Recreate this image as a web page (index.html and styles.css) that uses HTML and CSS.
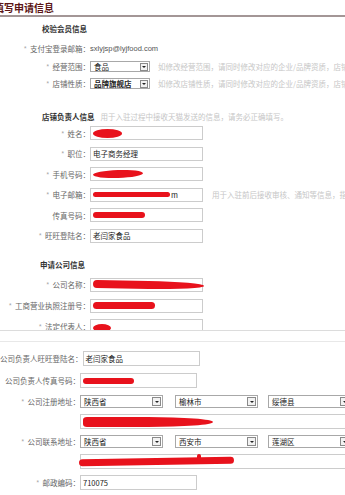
FILE: index.html
```html
<!DOCTYPE html>
<html lang="zh-CN">
<head>
    <meta charset="UTF-8">
    <meta name="viewport" content="width=device-width, initial-scale=1.0">
    <title>填写申请信息</title>
    <link rel="stylesheet" href="styles.css">
</head>
<body>
    <h2 class="page-title">填写申请信息</h2>

    <div class="part part-top">
        <h3 class="group-title gt-1">校验会员信息</h3>
        <div class="row r-email">
            <label class="lbl"><i class="req">*</i>支付宝登录邮箱：</label>
            <span class="plain">sxlyjsp@lyjfood.com</span>
        </div>
        <div class="row r-sel">
            <label class="lbl"><i class="req">*</i>经营范围：</label>
            <div class="select"><span>食品</span><b class="arrow"></b></div>
            <span class="hint">如修改经营范围，请同时修改对应的企业/品牌资质，店铺类型</span>
        </div>
        <div class="row r-sel">
            <label class="lbl"><i class="req">*</i>店铺性质：</label>
            <div class="select"><span class="dark">品牌旗舰店</span><b class="arrow"></b></div>
            <span class="hint">如修改店铺性质，请同时修改对应的企业/品牌资质，店铺类型</span>
        </div>

        <h3 class="group-title gt-2">店铺负责人信息<span class="hint">用于入驻过程中接收天猫发送的信息，请务必正确填写。</span></h3>
        <div class="row r-first">
            <label class="lbl"><i class="req">*</i>姓名：</label>
            <div class="input"><span class="scrib s-name"></span></div>
        </div>
        <div class="row">
            <label class="lbl"><i class="req">*</i>职位：</label>
            <div class="input">电子商务经理</div>
        </div>
        <div class="row">
            <label class="lbl"><i class="req">*</i>手机号码：</label>
            <div class="input"><span class="scrib s-mobile"></span></div>
        </div>
        <div class="row">
            <label class="lbl"><i class="req">*</i>电子邮箱：</label>
            <div class="input"><span class="scrib s-mail"></span>m</div>
            <span class="hint hint-wide">用于入驻前后接收审核、通知等信息，指导</span>
        </div>
        <div class="row">
            <label class="lbl">传真号码：</label>
            <div class="input"><span class="scrib s-fax"></span></div>
        </div>
        <div class="row">
            <label class="lbl"><i class="req">*</i>旺旺登陆名：</label>
            <div class="input">老闫家食品</div>
        </div>

        <h3 class="group-title gt-3">申请公司信息</h3>
        <div class="row r-co">
            <label class="lbl"><i class="req">*</i>公司名称：</label>
            <div class="input"><span class="scrib s-company"></span></div>
        </div>
        <div class="row r-co">
            <label class="lbl"><i class="req">*</i>工商营业执照注册号：</label>
            <div class="input"><span class="scrib s-license"></span></div>
        </div>
        <div class="row">
            <label class="lbl"><i class="req">*</i>法定代表人：</label>
            <div class="input"><span class="scrib s-legal"></span></div>
        </div>
    </div>

    <div class="cut"></div>

    <div class="part part-bottom">
        <div class="row r-b1">
            <label class="lbl">公司负责人旺旺登陆名：</label>
            <div class="input">老闫家食品</div>
        </div>
        <div class="row r-b2">
            <label class="lbl">公司负责人传真号码：</label>
            <div class="input"><span class="scrib s-cofax"></span></div>
        </div>
        <div class="row">
            <label class="lbl"><i class="req">*</i>公司注册地址：</label>
            <div class="select"><span>陕西省</span><b class="arrow"></b></div>
            <div class="select"><span>榆林市</span><b class="arrow"></b></div>
            <div class="select"><span>绥德县</span><b class="arrow"></b></div>
        </div>
        <div class="row">
            <span class="lbl"></span>
            <div class="input input-long"><span class="scrib s-addr1"></span></div>
        </div>
        <div class="row">
            <label class="lbl"><i class="req">*</i>公司联系地址：</label>
            <div class="select"><span>陕西省</span><b class="arrow"></b></div>
            <div class="select"><span>西安市</span><b class="arrow"></b></div>
            <div class="select"><span>莲湖区</span><b class="arrow"></b></div>
        </div>
        <div class="row">
            <span class="lbl"></span>
            <div class="input input-long"><span class="scrib s-addr2"></span><span class="scrib s-bump"></span></div>
        </div>
        <div class="row">
            <label class="lbl"><i class="req">*</i>邮政编码：</label>
            <div class="input">710075</div>
        </div>
    </div>
</body>
</html>
```

FILE: styles.css
```css
* {
    box-sizing: border-box;
    margin: 0;
    padding: 0;
}

body {
    width: 345px;
    height: 495px;
    overflow: hidden;
    background-color: #fff;
    font-family: "Noto Sans CJK SC", "Liberation Sans", sans-serif;
    font-size: 7.5px;
    color: #666;
}

.page-title {
    margin-left: -6px;
    font-size: 10px;
    line-height: 15px;
    font-weight: bold;
    color: #5c1616;
    border-bottom: 2px solid #a39696;
}

.part {
    overflow: hidden;
}

.part-top {
    height: 313px;
}

.cut {
    height: 12px;
    border-top: 1px solid #dcdcdc;
    border-bottom: 1px solid #e8e8e8;
}

.group-title {
    padding-left: 42px;
    font-size: 7.5px;
    line-height: 12px;
    font-weight: bold;
    color: #333;
    white-space: nowrap;
}

.group-title .hint {
    font-weight: normal;
    margin-left: 6px;
}

.gt-1 { margin-top: 6px; }
.gt-2 { margin-top: 22px; }
.gt-3 { margin-top: 16px; padding-left: 40px; }

.row {
    display: flex;
    align-items: center;
    white-space: nowrap;
    margin-top: 6.5px;
}

.r-email { height: 14px; margin-top: 6px; }
.r-sel { margin-top: 6px; }
.r-first { margin-top: 3px; }
.r-co { margin-top: 7px; }

.lbl {
    flex: 0 0 90px;
    display: flex;
    justify-content: flex-end;
    color: #666;
}

.part-bottom .lbl {
    flex-basis: 80px;
}

.req {
    font-style: normal;
    color: #aaa;
    margin-right: 3px;
}

.plain {
    color: #555;
    font-family: "Liberation Sans", sans-serif;
}

.input {
    flex: 0 0 auto;
    width: 113px;
    height: 14px;
    padding-left: 2px;
    display: flex;
    align-items: center;
    border: 1px solid #ccc;
    color: #222;
    overflow: visible;
}

.part-bottom .input {
    width: 117px;
    height: 15px;
}

.part-bottom .input.input-long {
    width: 280px;
}

.select {
    flex: 0 0 auto;
    width: 60px;
    height: 11px;
    padding: 0 1px 0 3px;
    display: flex;
    align-items: center;
    justify-content: space-between;
    border: 1px solid #a8a8a8;
    color: #222;
}

.select .dark {
    font-weight: bold;
}

.part-bottom .select {
    width: 83px;
    height: 13px;
    margin-right: 12px;
}

.part-bottom .select + .select + .select {
    margin-right: 0;
}

.part-bottom .select + .select {
    margin-right: 10px;
}

.arrow {
    width: 8px;
    height: 8px;
    border: 1px solid #8a8a8a;
    background-color: #f2f2f2;
    display: flex;
    align-items: center;
    justify-content: center;
}

.part-bottom .arrow {
    width: 9px;
    height: 9px;
}

.arrow::after {
    content: "";
    border-left: 2px solid transparent;
    border-right: 2px solid transparent;
    border-top: 2px solid #222;
}

.hint {
    margin-left: 8px;
    color: #c6c6c6;
}

.hint-wide {
    margin-left: 9px;
}

.r-b1 { margin-top: 9px; }
.r-b2 { margin-top: 7px; }
.r-b2 + .row { margin-top: 7px; }
.part-bottom .row { margin-top: 6px; }
.part-bottom .r-b1 { margin-top: 9px; }
.part-bottom .r-b2 { margin-top: 7px; }
.part-bottom .r-b2 + .row { margin-top: 7px; }

/* red marker over private data */
.scrib {
    display: inline-block;
    background-color: #e8121c;
    border-radius: 50%;
    flex: 0 0 auto;
}

.s-name { width: 29px; height: 9px; }
.s-mobile { width: 50px; height: 8px; transform: rotate(-2deg); }
.s-mail { width: 77px; height: 5px; margin-right: 1px; border-radius: 3px; }
.s-fax { width: 52px; height: 6px; border-radius: 4px; }
.s-company { width: 111px; height: 8px; border-radius: 4px 50% 50% 4px; transform: rotate(1deg); }
.s-license { width: 62px; height: 7px; border-radius: 4px; }
.s-legal { width: 18px; height: 8px; margin-top: 4px; }
.s-cofax { width: 51px; height: 6px; border-radius: 3px; }
.s-addr1 { width: 130px; height: 10px; border-radius: 4px 50% 50% 4px / 3px 50% 50% 3px; }
.s-addr2 { width: 155px; height: 7px; margin-left: -4px; border-radius: 4px; transform: rotate(-1deg); }
.s-bump { width: 4px; height: 8px; margin-left: -37px; margin-top: -8px; border-radius: 2px; }
```
